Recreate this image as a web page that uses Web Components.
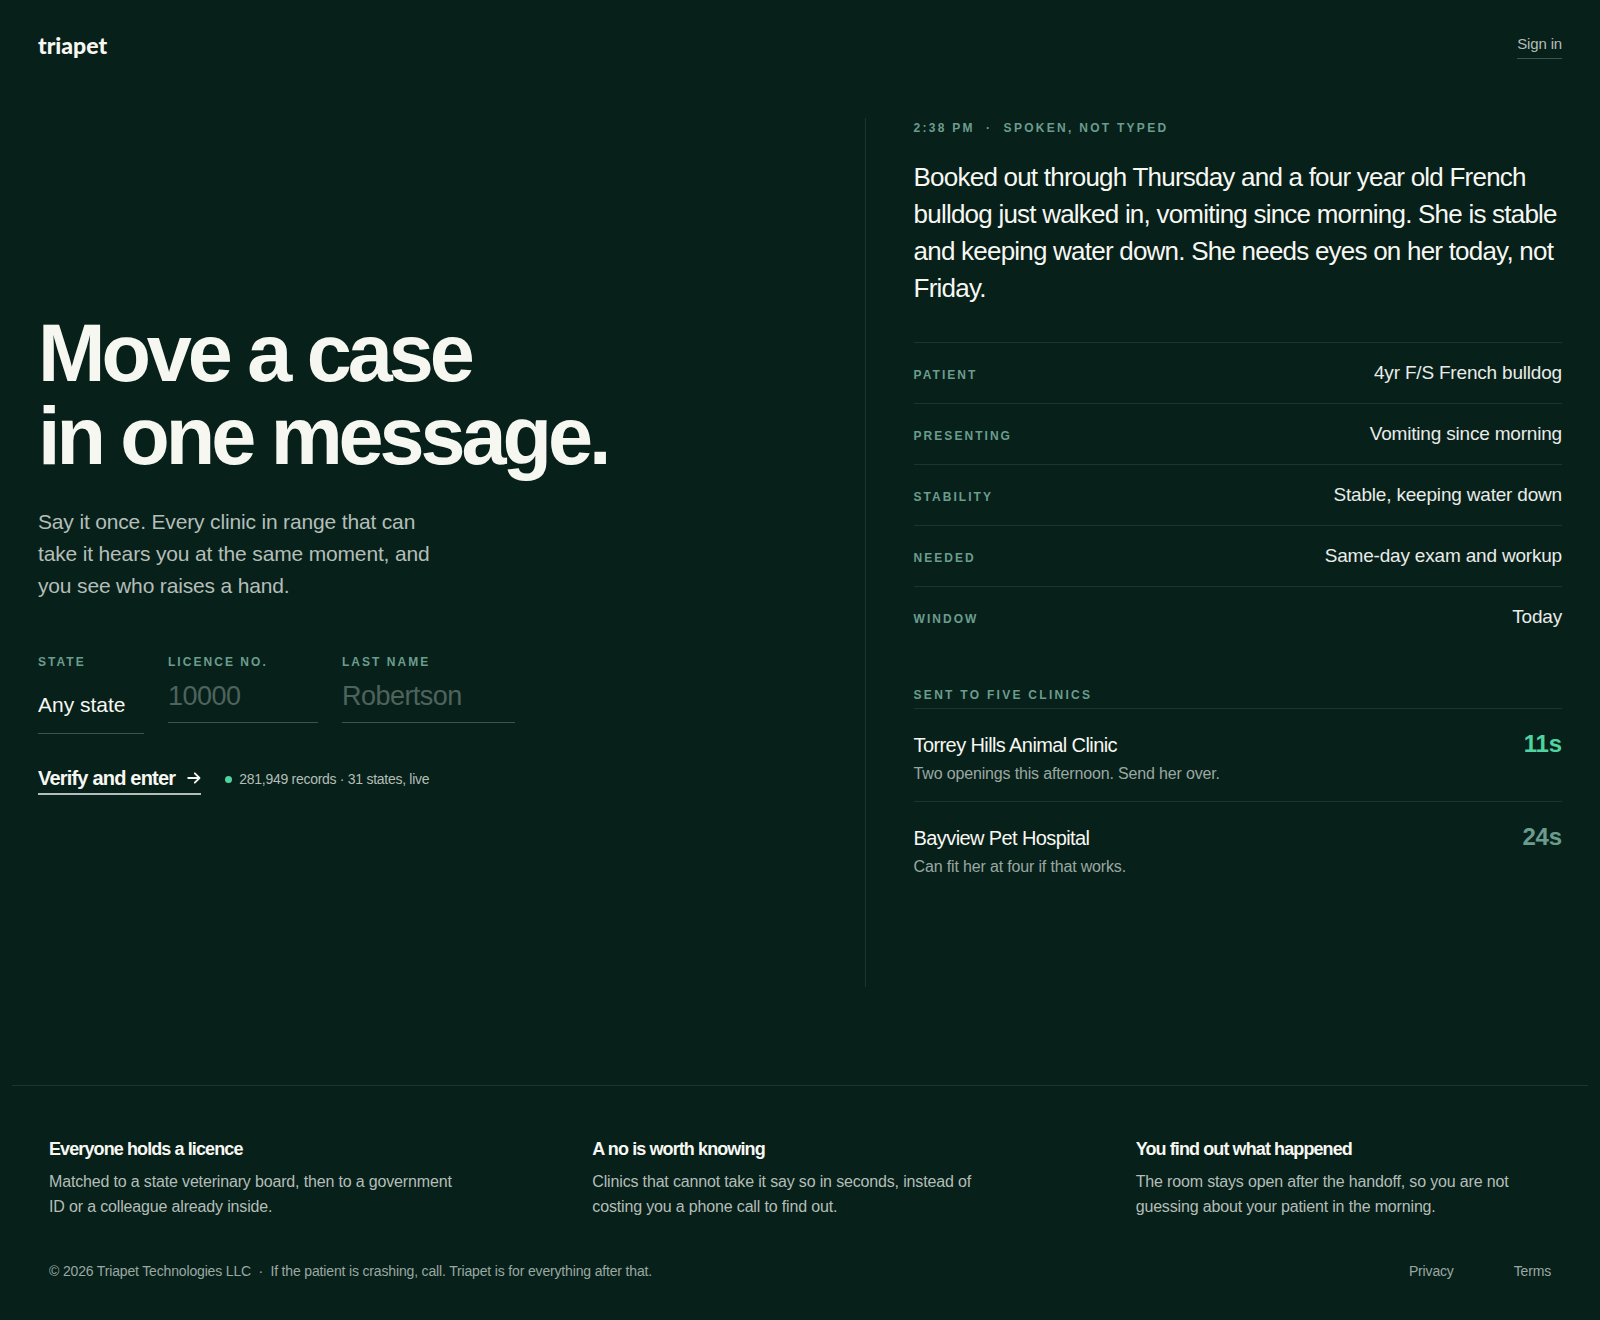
<!DOCTYPE html>
<html lang="en">
<head>
<meta charset="utf-8">
<meta name="viewport" content="width=device-width, initial-scale=1">
<title>Triapet</title>
<style>
  :root {
    --bg: #08201a;
    --ink: #f7f7f2;
    --ink-soft: #e8ece8;
    --muted: #b3beb8;
    --dim: #9aa8a2;
    --label: #6b9d8e;
    --faint: #4d635c;
    --rule: #1c352e;
    --rule-strong: #3d544c;
    --live: #4fd3a1;
    --track-display: -0.05em;
    --track-tight: -0.03em;
    --track-snug: -0.02em;
    --track-body: -0.01em;
  }
  body {
    margin: 0;
    min-height: 100vh;
    background: var(--bg);
    color: var(--ink);
    font-family: "Liberation Sans", Arial, sans-serif;
    font-size: 16px;
    letter-spacing: var(--track-body);
  }
</style>
</head>
<body>
<tp-page>
  <tp-header slot="header"></tp-header>
  <tp-pitch slot="pitch">
    <span slot="title">Move a case<br>in one message.</span>
    <span slot="lede">Say it once. Every clinic in range that can take it hears you at the same moment, and you see who raises a hand.</span>
    <tp-verify slot="form"></tp-verify>
  </tp-pitch>
  <tp-case slot="case">
    <span slot="eyebrow">2:38 PM&nbsp; ·&nbsp; SPOKEN, NOT TYPED</span>
    <span slot="quote">Booked out through Thursday and a four year old French bulldog just walked in, vomiting since morning. She is stable and keeping water down. She needs eyes on her today, not Friday.</span>
    <tp-fact><span slot="term">PATIENT</span>4yr F/S French bulldog</tp-fact>
    <tp-fact><span slot="term">PRESENTING</span>Vomiting since morning</tp-fact>
    <tp-fact><span slot="term">STABILITY</span>Stable, keeping water down</tp-fact>
    <tp-fact><span slot="term">NEEDED</span>Same-day exam and workup</tp-fact>
    <tp-fact><span slot="term">WINDOW</span>Today</tp-fact>
    <span slot="sent">SENT TO FIVE CLINICS</span>
    <tp-reply slot="reply" first><span slot="name">Torrey Hills Animal Clinic</span><span slot="time">11s</span>Two openings this afternoon. Send her over.</tp-reply>
    <tp-reply slot="reply"><span slot="name">Bayview Pet Hospital</span><span slot="time">24s</span>Can fit her at four if that works.</tp-reply>
  </tp-case>
  <tp-footer slot="footer">
    <tp-note><span slot="title">Everyone holds a licence</span>Matched to a state veterinary board, then to a government ID or a colleague already inside.</tp-note>
    <tp-note><span slot="title">A no is worth knowing</span>Clinics that cannot take it say so in seconds, instead of costing you a phone call to find out.</tp-note>
    <tp-note><span slot="title">You find out what happened</span>The room stays open after the handoff, so you are not guessing about your patient in the morning.</tp-note>
  </tp-footer>
</tp-page>

<script>
  const define = (name, html) => {
    const template = document.createElement('template');
    template.innerHTML = html;
    customElements.define(name, class extends HTMLElement {
      constructor() {
        super();
        this.attachShadow({ mode: 'open' }).append(template.content.cloneNode(true));
      }
    });
  };

  define('tp-page', `
    <style>
      :host { display: block; }
      main {
        display: grid;
        grid-template-columns: 32fr 27fr;
        min-height: calc(100vh - 451px);
        margin: 28px 38px 98px;
      }
      section { min-width: 0; }
      .pitch { display: flex; align-items: center; padding-top: 2px; }
      .case { border-left: 1px solid var(--rule); padding-left: 48px; }
    </style>
    <slot name="header"></slot>
    <main>
      <section class="pitch"><slot name="pitch"></slot></section>
      <section class="case"><slot name="case"></slot></section>
    </main>
    <slot name="footer"></slot>`);

  define('tp-header', `
    <style>
      :host { display: block; }
      header {
        display: flex;
        justify-content: space-between;
        align-items: center;
        padding: 30px 38px 28px;
      }
      a { text-decoration: none; }
      .brand {
        padding-bottom: 2px;
        color: var(--ink);
        font: 900 23px/30px Lato, "Liberation Sans", sans-serif;
        letter-spacing: 0;
      }
      .sign-in {
        color: var(--muted);
        font-size: 15px;
        line-height: 20px;
        padding-bottom: 4px;
        border-bottom: 1px solid var(--rule-strong);
      }
    </style>
    <header>
      <a class="brand" href="#">triapet</a>
      <a class="sign-in" href="#sign-in">Sign in</a>
    </header>`);

  define('tp-pitch', `
    <style>
      :host { display: block; }
      h1 {
        margin: 0 0 28px;
        font-size: 81px;
        line-height: 83px;
        font-weight: 700;
        letter-spacing: var(--track-display);
      }
      p {
        margin: 0 0 52px;
        max-width: 400px;
        color: var(--muted);
        font-size: 21px;
        line-height: 32px;
      }
    </style>
    <h1><slot name="title"></slot></h1>
    <p><slot name="lede"></slot></p>
    <slot name="form"></slot>`);

  define('tp-verify', `
    <style>
      :host { display: block; }
      form { display: flex; flex-direction: column; gap: 29px; margin: 0; }
      .fields, .actions { display: flex; align-items: flex-start; gap: 24px; }
      .field { display: flex; flex-direction: column; }
      .state { width: 106px; }
      .licence { width: 150px; }
      .surname { width: 173px; }
      label {
        color: var(--label);
        font-size: 12px;
        line-height: 16px;
        font-weight: 700;
        letter-spacing: 0.17em;
        white-space: nowrap;
      }
      input, select {
        appearance: none;
        box-sizing: border-box;
        width: 100%;
        margin: 0;
        padding: 0;
        border: 0;
        border-bottom: 1px solid var(--rule-strong);
        border-radius: 0;
        outline: 0;
        background: transparent;
        color: var(--ink);
        font-family: inherit;
      }
      input {
        height: 53px;
        font-size: 27px;
        letter-spacing: var(--track-snug);
      }
      input::placeholder { color: var(--faint); opacity: 1; }
      select { height: 64px; padding-top: 15px; padding-bottom: 9px; font-size: 21px; letter-spacing: 0; }
      option { color: #08201a; }
      .actions { align-items: center; }
      button {
        display: flex;
        align-items: center;
        gap: 12px;
        margin: 0;
        padding: 0;
        border: 0;
        border-bottom: 2px solid var(--muted);
        background: none;
        color: var(--ink);
        font: 700 20px/30px "Liberation Sans", Arial, sans-serif;
        letter-spacing: -0.04em;
      }
      svg { display: block; width: 14px; height: 14px; }
      .live {
        display: flex;
        align-items: center;
        gap: 7px;
        color: var(--muted);
        font-size: 14px;
        line-height: 20px;
        letter-spacing: var(--track-snug);
      }
      .live i { width: 7px; height: 7px; border-radius: 50%; background: var(--live); }
    </style>
    <form>
      <div class="fields">
        <div class="field state">
          <label for="state">STATE</label>
          <select id="state"><option>Any state</option></select>
        </div>
        <div class="field licence">
          <label for="licence">LICENCE NO.</label>
          <input id="licence" type="text" placeholder="10000">
        </div>
        <div class="field surname">
          <label for="surname">LAST NAME</label>
          <input id="surname" type="text" placeholder="Robertson">
        </div>
      </div>
      <div class="actions">
        <button type="button">Verify and enter
          <svg viewBox="0 0 14 14" fill="none" stroke="currentColor" stroke-width="1.8" stroke-linecap="round" stroke-linejoin="round" aria-hidden="true"><path d="M1.2 7h11.3M7.8 2.3 12.5 7 7.8 11.7"/></svg>
        </button>
        <span class="live"><i></i>281,949 records · 31 states, live</span>
      </div>
    </form>`);

  define('tp-case', `
    <style>
      :host { display: block; }
      .eyebrow, .sent {
        margin: 0;
        color: var(--label);
        font-size: 12px;
        line-height: 16px;
        font-weight: 700;
        letter-spacing: 0.19em;
      }
      .eyebrow { padding: 2px 0 23px; }
      .sent { padding: 40px 0 5px; }
      blockquote {
        margin: 0 0 35px;
        font-size: 26px;
        line-height: 37px;
        letter-spacing: var(--track-tight);
      }
    </style>
    <p class="eyebrow"><slot name="eyebrow"></slot></p>
    <blockquote><slot name="quote"></slot></blockquote>
    <div><slot></slot></div>
    <p class="sent"><slot name="sent"></slot></p>
    <div><slot name="reply"></slot></div>`);

  define('tp-fact', `
    <style>
      :host { display: block; border-top: 1px solid var(--rule); }
      dl {
        display: flex;
        justify-content: space-between;
        align-items: baseline;
        margin: 0;
        padding: 18px 0;
      }
      dt {
        color: var(--label);
        font-size: 12px;
        line-height: 16px;
        font-weight: 700;
        letter-spacing: 0.17em;
      }
      dd {
        margin: 0;
        color: var(--ink-soft);
        font-size: 19px;
        line-height: 24px;
        letter-spacing: var(--track-body);
      }
    </style>
    <dl><dt><slot name="term"></slot></dt><dd><slot></slot></dd></dl>`);

  define('tp-reply', `
    <style>
      :host { display: block; border-top: 1px solid var(--rule); --time: var(--label); }
      :host([first]) { --time: var(--live); }
      article { padding: 23px 0 17px; }
      .top { display: flex; justify-content: space-between; align-items: baseline; height: 24px; }
      .name { font-size: 20px; line-height: 24px; letter-spacing: var(--track-tight); }
      .time { color: var(--time); font-size: 24px; line-height: 24px; font-weight: 700; }
      p { margin: 8px 0 0; color: var(--dim); font-size: 16px; line-height: 20px; }
    </style>
    <article>
      <div class="top">
        <span class="name"><slot name="name"></slot></span>
        <span class="time"><slot name="time"></slot></span>
      </div>
      <p><slot></slot></p>
    </article>`);

  define('tp-note', `
    <style>
      :host { display: block; }
      h2 {
        margin: 0 0 9px;
        font-size: 18px;
        line-height: 22px;
        font-weight: 700;
        letter-spacing: var(--track-display);
      }
      p { margin: 0; color: var(--muted); font-size: 16px; line-height: 25px; }
    </style>
    <h2><slot name="title"></slot></h2>
    <p><slot></slot></p>`);

  define('tp-footer', `
    <style>
      :host { display: block; }
      footer {
        margin: 0 12px;
        padding: 52px 37px 37px;
        border-top: 1px solid var(--rule);
      }
      .notes { display: grid; grid-template-columns: repeat(3, 1fr); gap: 128px; }
      .legal {
        display: flex;
        justify-content: space-between;
        margin-top: 42px;
        color: var(--dim);
        font-size: 14px;
        line-height: 20px;
      }
      nav { display: flex; gap: 60px; }
      a { color: inherit; text-decoration: none; }
    </style>
    <footer>
      <div class="notes"><slot></slot></div>
      <div class="legal">
        <span>© 2026 Triapet Technologies LLC&nbsp; ·&nbsp; If the patient is crashing, call. Triapet is for everything after that.</span>
        <nav><a href="#privacy">Privacy</a><a href="#terms">Terms</a></nav>
      </div>
    </footer>`);
</script>
</body>
</html>
